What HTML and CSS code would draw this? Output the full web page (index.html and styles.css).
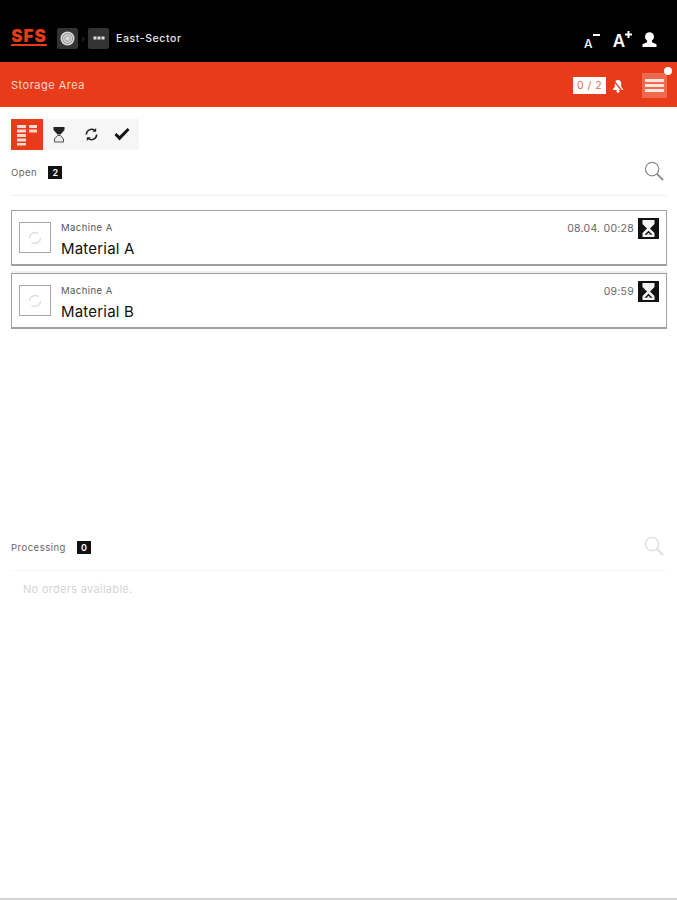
FILE: index.html
```html
<!DOCTYPE html>
<html>
  <head>
    <title>Storage Area</title>
    <link rel="stylesheet" href="styles.css">
  </head>
  <body>
    <div class="page">
      <header class="topbar">
        <div class="logo">SFS</div>
        <div class="crumb-box">
          <svg width="15" height="15" viewBox="0 0 15 15"><circle cx="7.500" cy="7.500" r="7" fill="#d8d8d8"/><circle cx="7.500" cy="7.500" r="5" fill="none" stroke="#8a8a8a" stroke-width="1"/><circle cx="7.500" cy="7.500" r="2.800" fill="none" stroke="#9a9a9a" stroke-width="1"/></svg>
        </div>
        <span class="crumb-sep">&rsaquo;</span>
        <div class="crumb-box">
          <svg width="12" height="4" viewBox="0 0 12 4"><rect x="0.500" y="0.500" width="3" height="3" fill="#ddd"/><rect x="4.500" y="0.500" width="3" height="3" fill="#ddd"/><rect x="8.500" y="0.500" width="3" height="3" fill="#ddd"/></svg>
        </div>
        <span class="sector">East-Sector</span>
        <div class="top-actions">
          <span class="font-btn font-small">A<svg width="7" height="2" viewBox="0 0 7 2"><rect width="7" height="2" fill="#fff"/></svg></span>
          <span class="font-btn font-big">A<svg width="7" height="7" viewBox="0 0 7 7"><path d="M2.500 0h2v2.500H7v2H4.500V7h-2V4.500H0v-2h2.500z" fill="#fff"/></svg></span>
          <svg class="user-icon" width="15" height="15" viewBox="0 0 15 15"><circle cx="7.500" cy="4.800" r="4.500" fill="#fff"/><path d="M5 8.500h5v1.700l4.500 2V15H.5v-2.800L5 10.200z" fill="#fff"/></svg>
        </div>
      </header>

      <div class="redbar">
        <span class="area-name">Storage Area</span>
        <span class="counter">0 / 2</span>
        <svg class="bell" width="12" height="14" viewBox="0 0 12 14"><path d="M6 1c2.300 0 3.200 1.800 3.200 3.800v3L11.500 11H.5l2.300-3.200v-3C2.800 2.800 3.700 1 6 1z" fill="#fff"/><circle cx="6" cy="12.300" r="1.500" fill="#fff"/><path d="M1 1l10 12" stroke="#e83b1a" stroke-width="1.200"/></svg>
        <div class="menu-btn">
          <span class="menu-line"></span>
          <span class="menu-line"></span>
          <span class="menu-line"></span>
          <span class="menu-dot"></span>
        </div>
      </div>

      <main class="content">
        <div class="tabs">
          <div class="tab tab-active">
            <svg width="22" height="22" viewBox="0 0 22 22"><g fill="#fdd8cf"><rect x="1" y="1" width="9" height="3"/><rect x="1" y="5.500" width="9" height="3"/><rect x="1" y="10" width="9" height="3"/><rect x="1" y="14.500" width="9" height="3"/><rect x="1" y="19" width="9" height="2.500"/><rect x="13" y="1" width="8" height="3"/><rect x="13" y="5.500" width="8" height="3"/></g></svg>
          </div>
          <div class="tab">
            <svg width="12" height="16" viewBox="0 0 12 16"><path d="M.5 0h11v3L7.500 7.500h-3L.5 3z" fill="#222"/><path d="M4.500 8.500h3l3 3.500v3H1.500v-3z" fill="#ececec" stroke="#555" stroke-width="1"/></svg>
          </div>
          <div class="tab">
            <svg width="15" height="15" viewBox="0 0 16 16" fill="none" stroke="#222" stroke-width="1.700"><path d="M2.500 8a5.500 5.500 0 0 1 9-4.200"/><path d="M13.500 8a5.500 5.500 0 0 1-9 4.200"/><path d="M13 1v4H9z" fill="#222" stroke="none"/><path d="M3 15v-4h4z" fill="#222" stroke="none"/></svg>
          </div>
          <div class="tab tab-check">
            <svg width="16" height="13" viewBox="0 0 16 13"><path d="M.5 7l2-2 3 3L13.500 0 15.500 2 5.500 12.500z" fill="#111"/></svg>
          </div>
        </div>

        <section class="section section-open">
          <div class="section-head section-head-open">
            <span class="section-title">Open</span>
            <span class="count">2</span>
            <svg class="search" width="21" height="21" viewBox="0 0 22 22" fill="none" stroke="#8a8a8a"><circle cx="8.500" cy="8.500" r="7" stroke-width="1.300"/><path d="M13.500 13.500l6.500 6.500" stroke-width="2"/></svg>
          </div>
          <div class="order">
            <div class="order-check">
              <svg width="16" height="16" viewBox="0 0 16 16" fill="none" stroke="#ddd" stroke-width="1.300"><path d="M2.500 8a5.500 5.500 0 0 1 9-4.200"/><path d="M13.500 8a5.500 5.500 0 0 1-9 4.200"/></svg>
            </div>
            <div class="order-text">
              <div class="machine">Machine A</div>
              <div class="material">Material A</div>
            </div>
            <span class="order-time">08.04. 00:28</span>
            <div class="order-status">
              <svg width="13" height="17" viewBox="0 0 13 17"><path d="M.5 0h12v4L8 8.500l4.500 4.500v4H.5v-4L5 8.500.5 4z" fill="#f4f4f4"/><path d="M2.500 14.800l4-4 4 4z" fill="#111"/><path d="M4.500 14.800l2-2 2 2z" fill="#f4f4f4"/></svg>
            </div>
          </div>
          <div class="order">
            <div class="order-check">
              <svg width="16" height="16" viewBox="0 0 16 16" fill="none" stroke="#ddd" stroke-width="1.300"><path d="M2.500 8a5.500 5.500 0 0 1 9-4.200"/><path d="M13.500 8a5.500 5.500 0 0 1-9 4.200"/></svg>
            </div>
            <div class="order-text">
              <div class="machine">Machine A</div>
              <div class="material">Material B</div>
            </div>
            <span class="order-time">09:59</span>
            <div class="order-status">
              <svg width="13" height="17" viewBox="0 0 13 17"><path d="M.5 0h12v4L8 8.500l4.500 4.500v4H.5v-4L5 8.500.5 4z" fill="#f4f4f4"/><path d="M2.500 14.800l4-4 4 4z" fill="#111"/><path d="M4.500 14.800l2-2 2 2z" fill="#f4f4f4"/></svg>
            </div>
          </div>
        </section>

        <section class="section">
          <div class="section-head section-head-faint">
            <span class="section-title">Processing</span>
            <span class="count">0</span>
            <svg class="search" width="21" height="21" viewBox="0 0 22 22" fill="none" stroke="#dcdcdc"><circle cx="8.500" cy="8.500" r="7" stroke-width="1.300"/><path d="M13.500 13.500l6.500 6.500" stroke-width="2"/></svg>
          </div>
          <div class="empty">No orders available.</div>
        </section>
      </main>
    </div>
  </body>
</html>
```

FILE: styles.css
```css
html, body {
  margin: 0;
  padding: 0;
}

body {
  font-family: Inter, "Liberation Sans", sans-serif;
  background-color: #fff;
  color: #111;
}

.page {
  display: flex;
  flex-direction: column;
  height: 900px;
  box-sizing: border-box;
  border-bottom: 2px solid #d4d4d4;
  overflow: hidden;
}

/* Top black bar */
.topbar {
  display: flex;
  align-items: center;
  height: 62px;
  padding: 14px 20px 0 11px;
  box-sizing: border-box;
  background-color: #000;
  flex-shrink: 0;
}

.logo {
  width: 36px;
  margin-right: 10px;
  font-size: 17px;
  font-weight: 900;
  line-height: 13px;
  letter-spacing: 1px;
  color: #e83b1a;
  border-bottom: 2px solid #e83b1a;
  padding-bottom: 1px;
  text-align: center;
}

.crumb-box {
  display: flex;
  align-items: center;
  justify-content: center;
  width: 21px;
  height: 21px;
  background-color: #333;
  border-radius: 2px;
}

.crumb-sep {
  width: 10px;
  font-size: 9px;
  color: #444;
  text-align: center;
}

.sector {
  margin-left: 7px;
  font-size: 10.500px;
  font-weight: 500;
  letter-spacing: 0.6px;
  color: #e4e4e4;
}

.top-actions {
  display: flex;
  align-items: flex-end;
  margin-left: auto;
  margin-top: 5px;
}

.font-btn {
  display: flex;
  color: #fff;
  font-weight: 500;
  line-height: 1;
}

.font-small {
  font-size: 12px;
  margin-right: 13px;
}

.font-small svg {
  margin-top: -4px;
}

.font-big {
  font-size: 17px;
  font-weight: 600;
  margin-right: 10px;
}

.font-big svg {
  margin-top: -2px;
}

.user-icon {
  margin-bottom: 3px;
}

/* Red bar */
.redbar {
  display: flex;
  align-items: center;
  height: 45px;
  padding: 2px 10px 0 11px;
  box-sizing: border-box;
  background-color: #e83b1a;
  flex-shrink: 0;
}

.area-name {
  margin-top: -2px;
  font-size: 11px;
  letter-spacing: 0.5px;
  color: #f8d8d0;
}

.counter {
  margin-left: auto;
  width: 33px;
  height: 17px;
  background-color: #fff;
  color: #e8694f;
  font-size: 10.500px;
  letter-spacing: 0.5px;
  line-height: 17px;
  text-align: center;
}

.bell {
  margin: 0 18px 0 6px;
}

.menu-btn {
  position: relative;
  display: flex;
  flex-direction: column;
  justify-content: center;
  gap: 2px;
  width: 25px;
  height: 25px;
  padding: 0 3px;
  box-sizing: border-box;
  background-color: #ee6a4f;
}

.menu-line {
  height: 3px;
  background-color: #fde4dd;
}

.menu-dot {
  position: absolute;
  top: -6px;
  right: -5px;
  width: 8px;
  height: 8px;
  background-color: #fff;
  border-radius: 50%;
}

/* Content */
.content {
  padding: 12px 10px 0 11px;
}

.tabs {
  display: flex;
  width: 128px;
  height: 31px;
  background-color: #f6f6f6;
}

.tab {
  display: flex;
  align-items: center;
  justify-content: center;
  width: 32px;
}

.tab-active {
  background-color: #e83b1a;
}

.tab-check {
  padding-right: 2px;
  box-sizing: border-box;
}

.section-open {
  height: 375px;
}

.section-head {
  display: flex;
  align-items: center;
  height: 45px;
  border-bottom: 1px solid #f0f0f0;
}

.section-head-open {
  margin-bottom: 14px;
}

.section-head-faint {
  border-bottom-color: #f8f8f8;
}

.section-title {
  font-size: 9.500px;
  letter-spacing: 0.5px;
  color: #666;
}

.count {
  width: 14px;
  height: 13px;
  margin-left: 11px;
  background-color: #111;
  color: #fff;
  font-size: 9px;
  font-weight: 600;
  line-height: 13px;
  text-align: center;
}

.search {
  margin: -2px 2px 0 auto;
}

.order {
  display: flex;
  align-items: flex-start;
  height: 56px;
  box-sizing: border-box;
  padding: 11px 0 0 7px;
  margin-bottom: 7px;
  border: 1px solid #a0a0a0;
  border-bottom-width: 2px;
}

.order + .order {
  box-shadow: 0 -2px 0 #efefef;
}

.order-check {
  display: flex;
  align-items: center;
  justify-content: center;
  width: 32px;
  height: 31px;
  border: 1px solid #a8a8a8;
  box-sizing: border-box;
  margin-right: 10px;
}

.order-text {
  flex: 1;
}

.machine {
  font-size: 9.500px;
  letter-spacing: 0.45px;
  line-height: 12px;
  color: #555;
}

.material {
  margin-top: 6px;
  font-size: 15px;
  letter-spacing: 0.2px;
  line-height: 18px;
  color: #111;
}

.order-time {
  font-size: 10.500px;
  letter-spacing: 0.25px;
  line-height: 14px;
  color: #666;
  margin-right: 4px;
}

.order-status {
  display: flex;
  align-items: center;
  justify-content: center;
  width: 21px;
  height: 21px;
  margin: -4px 7px 0 0;
  background-color: #111;
}

.empty {
  padding: 11px 0 0 12px;
  font-size: 11px;
  letter-spacing: 0.3px;
  color: #d4d4d4;
}
```
